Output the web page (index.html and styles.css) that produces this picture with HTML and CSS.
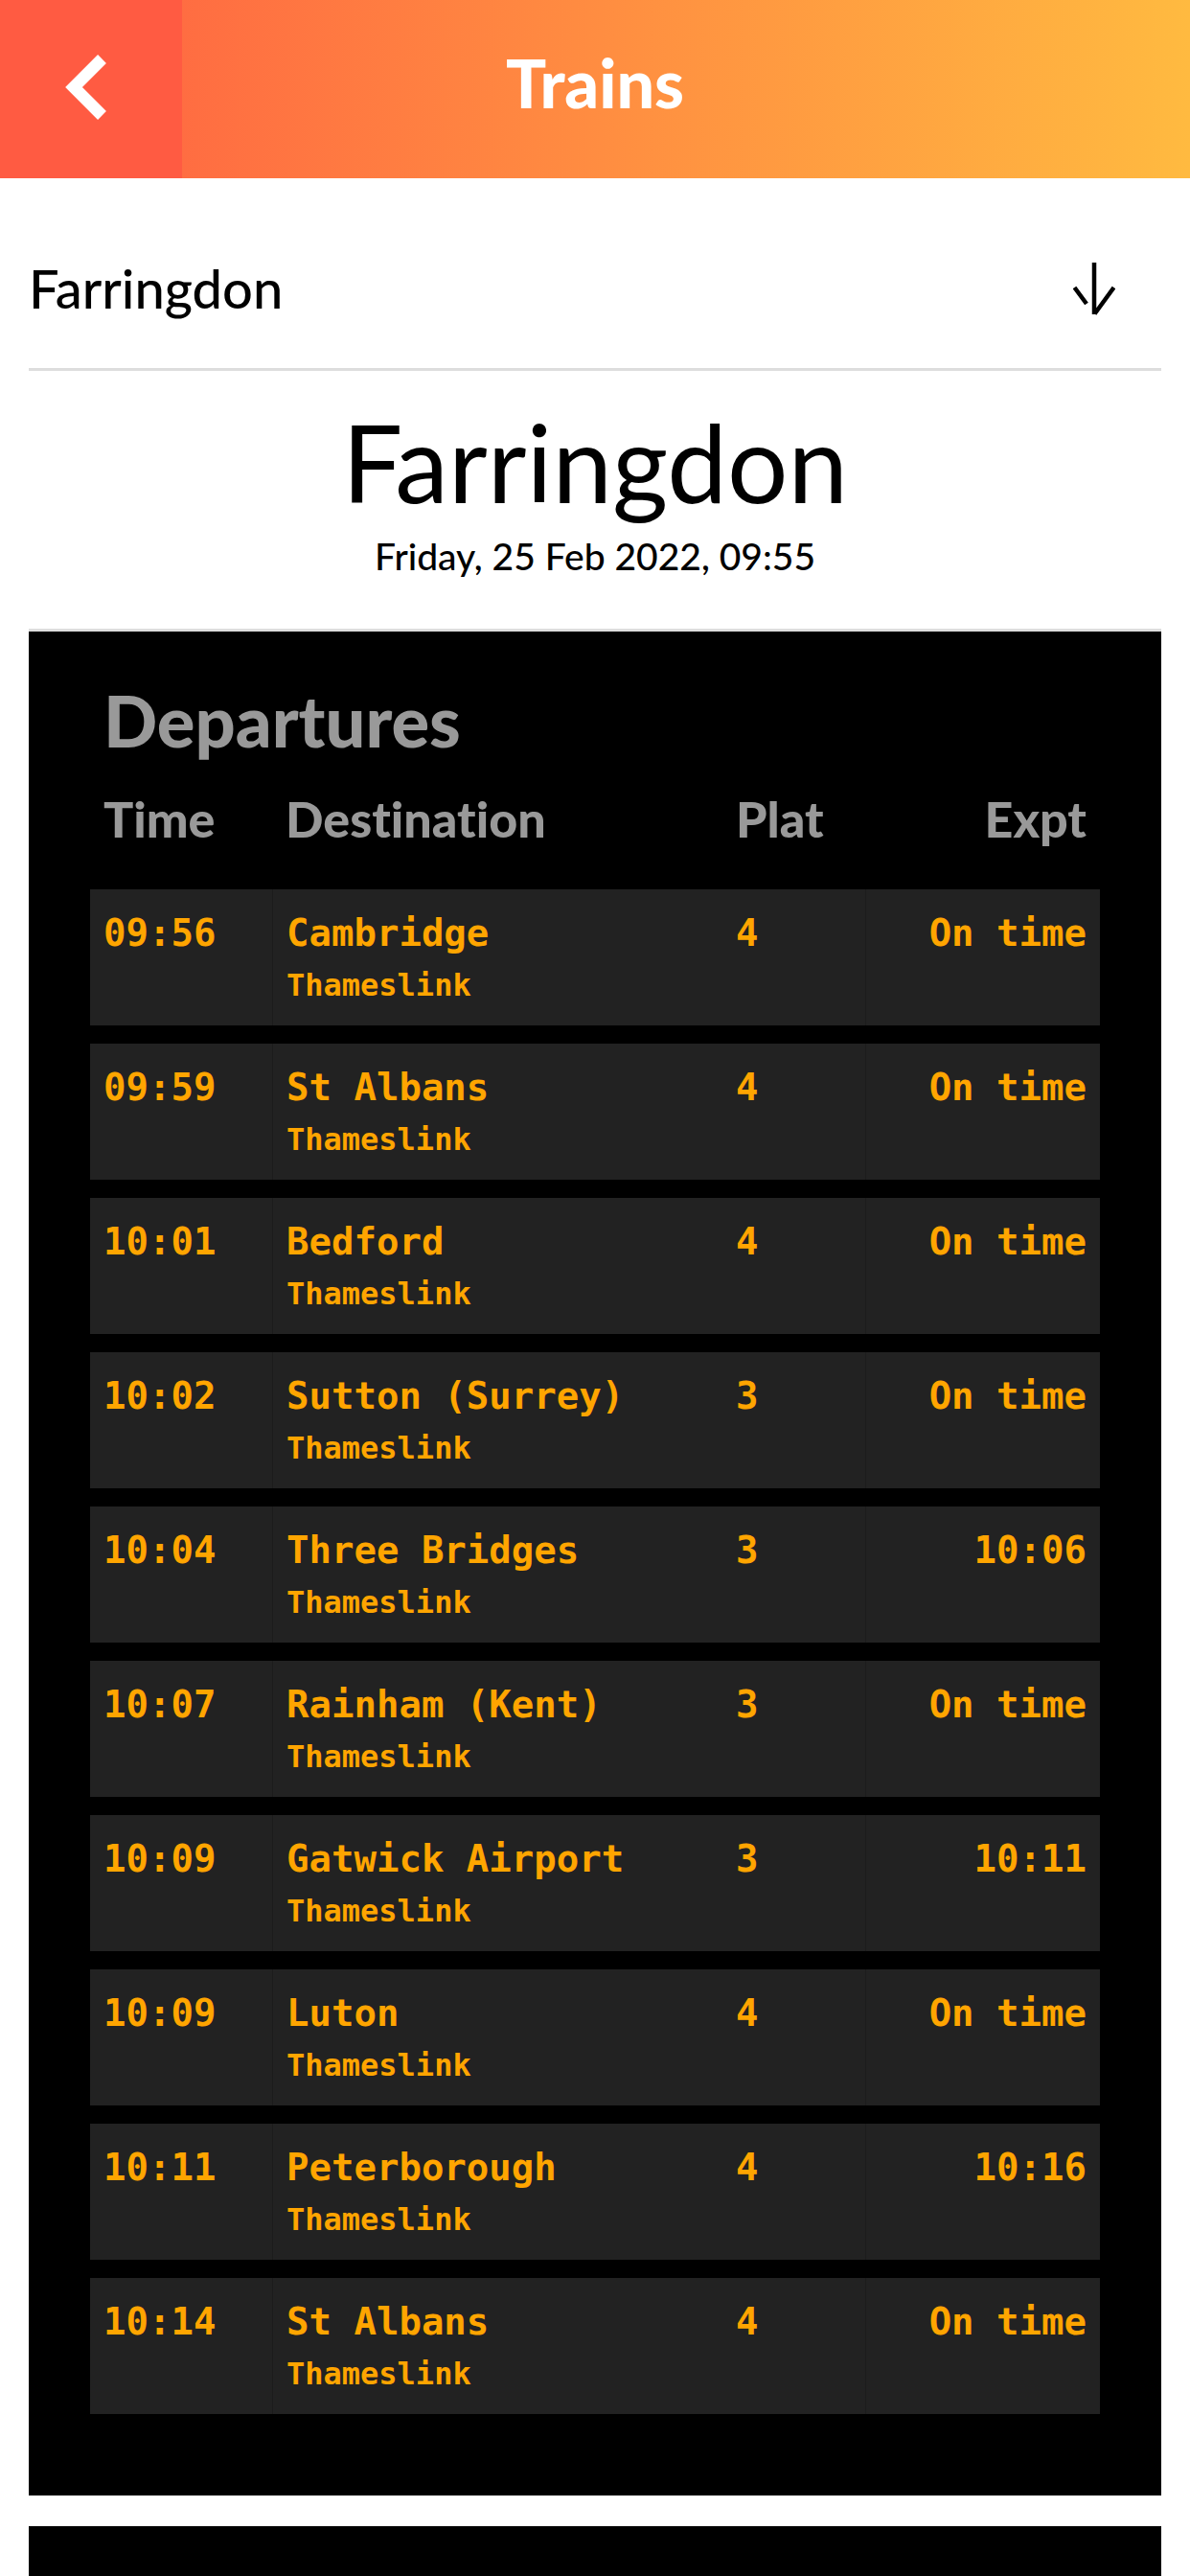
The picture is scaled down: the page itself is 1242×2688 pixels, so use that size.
FILE: index.html
```
<!DOCTYPE html>
<html lang="en">
	<head>
		<meta charset="UTF-8">
		<meta name="viewport" content="width=device-width,initial-scale=1">
		<title>Trains</title>
		<link rel="stylesheet" href="styles.css">
	</head>
	<body>

		<header class="topbar">
			<button class="back" type="button" aria-label="Back">
				<svg width="44" height="68" viewBox="0 0 44 68"><path d="M38.500 4.500 9 34l29.500 29.500" fill="none" stroke="#fff" stroke-width="12.500"/></svg>
			</button>
			<h1 class="topbar-title">Trains</h1>
		</header>

		<main class="content">

			<div class="picker">
				<select class="picker-select" aria-label="Station">
					<option>Farringdon</option>
				</select>
				<svg class="picker-arrow" width="44" height="56" viewBox="0 0 44 56" fill="none" stroke="#000" stroke-width="4.500"><path d="M22 0v54M1.500 26 14 43M42.500 26 22.500 53.500"/></svg>
			</div>

			<div class="station">
				<h2 class="station-name">Farringdon</h2>
				<p class="station-date">Friday, 25 Feb 2022, 09:55</p>
			</div>

			<section class="board">
				<h3 class="board-title">Departures</h3>
				<table class="trains">
					<thead>
						<tr><th class="time">Time</th><th>Destination</th><th class="plat">Plat</th><th class="expt">Expt</th></tr>
					</thead>
					<tbody>
						<tr><td>09:56</td><td>Cambridge<span class="operator">Thameslink</span></td><td>4</td><td>On time</td></tr>
						<tr><td>09:59</td><td>St Albans<span class="operator">Thameslink</span></td><td>4</td><td>On time</td></tr>
						<tr><td>10:01</td><td>Bedford<span class="operator">Thameslink</span></td><td>4</td><td>On time</td></tr>
						<tr><td>10:02</td><td>Sutton (Surrey)<span class="operator">Thameslink</span></td><td>3</td><td>On time</td></tr>
						<tr><td>10:04</td><td>Three Bridges<span class="operator">Thameslink</span></td><td>3</td><td>10:06</td></tr>
						<tr><td>10:07</td><td>Rainham (Kent)<span class="operator">Thameslink</span></td><td>3</td><td>On time</td></tr>
						<tr><td>10:09</td><td>Gatwick Airport<span class="operator">Thameslink</span></td><td>3</td><td>10:11</td></tr>
						<tr><td>10:09</td><td>Luton<span class="operator">Thameslink</span></td><td>4</td><td>On time</td></tr>
						<tr><td>10:11</td><td>Peterborough<span class="operator">Thameslink</span></td><td>4</td><td>10:16</td></tr>
						<tr><td>10:14</td><td>St Albans<span class="operator">Thameslink</span></td><td>4</td><td>On time</td></tr>
					</tbody>
				</table>
			</section>

			<!-- next board, fills the rest of the page -->
			<section class="board-next"></section>

		</main>
	</body>
</html>
```
FILE: styles.css
```
*{
	margin:0;
	padding:0;
	box-sizing: border-box;
}

body{
	display: flex;
	flex-direction: column;
	min-height: 100vh;
	font-family: Lato, "Liberation Sans", sans-serif;
	font-variant-ligatures: none;
	background: #fff;
	color:#000;
}

/* header */
.topbar{
	display: grid;
	grid-template-columns: 190px 1fr 190px;
	height:186px;
	background: linear-gradient(to right, #ff5f42, #ffba40);
}
.back{
	display: flex;
	align-items: center;
	justify-content: center;
	padding:0 10px 4px 0;
	border:0;
	background: #ff5b42;
}
.topbar-title{
	line-height: 172px;
	font-size: 70px;
	font-weight: 900;
	text-align: center;
	color:#fff;
}

.content{
	flex:1;
	display: flex;
	flex-direction: column;
	padding:0 30px;
}

/* station select */
.picker{
	position: relative;
	padding-top: 30px;
	border-bottom:3px solid #ddd;
}
.picker-select{
	display: block;
	width:100%;
	height:168px;
	border:0;
	background: transparent;
	font:500 56px Lato, "Liberation Sans", sans-serif;
	color:#000;
	-webkit-appearance: none;
	appearance: none;
}
.picker-arrow{
	position: absolute;
	right:48px;
	top:88px;
	pointer-events: none;
}

.station{
	padding:30px 0 51px;
	border-bottom:3px solid #ddd;
	text-align: center;
}
.station-name{
	line-height: 130px;
	font-size: 112px;
	font-weight: 400;
}
.station-date{
	margin-top: 8px;
	line-height: 50px;
	font-size: 39px;
	font-weight: 500;
}

/* departures board */
.board{
	padding:49px 64px 66px;
	background: #000;
}
.board-title{
	padding:0 14px;
	line-height: 88px;
	font-size: 74px;
	font-weight: 900;
	color:#999;
}
.trains{
	width:100%;
	table-layout: fixed;
	border-spacing: 0 19px;
}
.trains th{
	padding:8px 14px 24px;
	line-height: 62px;
	font-size: 52px;
	font-weight: 900;
	text-align: left;
	color:#999;
}
.trains .time{
	width:190px;
}
.trains .plat{
	width:149px;
}
.trains .expt{
	width:245px;
}
.trains td{
	padding:21px 14px 13px;
	background: #222;
	font:bold 39px/50px "DejaVu Sans Mono", monospace;
	vertical-align: top;
	white-space: nowrap;
	color:#ffa500;
}
.trains td:nth-child(even){
	border-left:1px solid #1c1c1c;
}
.trains th:last-child,
.trains td:last-child{
	text-align: right;
}
.operator{
	display: block;
	line-height: 58px;
	font-size: 32px;
}

.board-next{
	flex:1;
	margin-top: 32px;
	background: #000;
}
```
